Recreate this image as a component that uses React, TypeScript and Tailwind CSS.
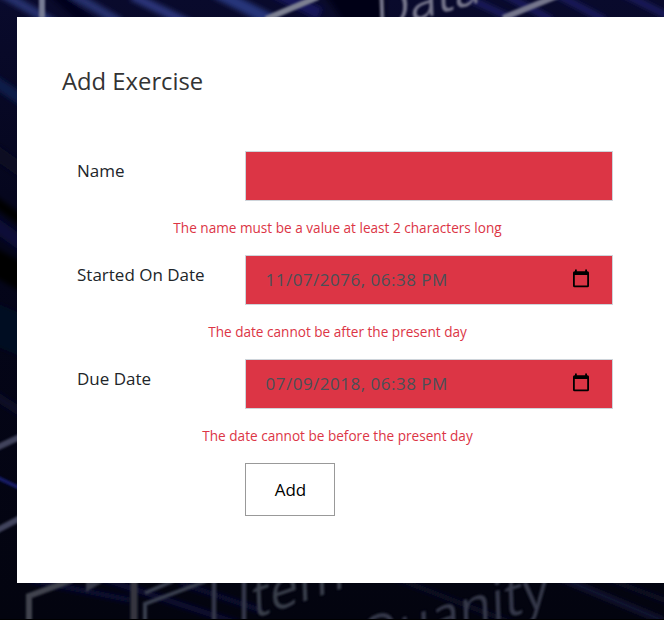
import React from "react";

function Backdrop() {
  return (
    <svg className="absolute inset-0 h-full w-full" viewBox="0 0 664 620" preserveAspectRatio="none" aria-hidden="true">
      <defs>
        <linearGradient id="night" x1="0" y1="0" x2="0" y2="1">
          <stop offset="0" stopColor="#090a2c" />
          <stop offset="0.4" stopColor="#04051a" />
          <stop offset="1" stopColor="#03040f" />
        </linearGradient>
        <filter id="streak" filterUnits="userSpaceOnUse" x="-40" y="-40" width="744" height="700">
          <feGaussianBlur stdDeviation="2.5" />
        </filter>
        <filter id="soft" filterUnits="userSpaceOnUse" x="-40" y="-40" width="744" height="700">
          <feGaussianBlur stdDeviation="0.8" />
        </filter>
      </defs>
      <rect width="664" height="620" fill="url(#night)" />
      <g filter="url(#streak)" fill="none">
        <path d="M-6 -11L54 23M68 -8L120 22" stroke="#26306e" strokeWidth="9" />
        <path d="M52 -10L92 26" stroke="#04051a" strokeWidth="12" />
        <path d="M132 -4L190 24" stroke="#2a3679" strokeWidth="9" />
        <path d="M215 -8L275 22" stroke="#27347a" strokeWidth="12" />
        <path d="M275 -8L320 14" stroke="#15155a" strokeWidth="12" />
        <path d="M325 -6H385V24H345Z" fill="#030313" />
        <path d="M468 -2L515 20M500 -8L552 20M552 -8L605 20M620 -8L680 22" stroke="#1b1e60" strokeWidth="6" />
        <path d="M-20 72L38 110" stroke="#101a4a" strokeWidth="12" />
        <path d="M-20 141L38 182" stroke="#080a22" strokeWidth="14" />
        <path d="M-20 191L38 232" stroke="#000004" strokeWidth="10" />
        <path d="M-20 214L38 255" stroke="#080f38" strokeWidth="14" />
        <path d="M-20 254L38 286" stroke="#000003" strokeWidth="26" />
        <path d="M-20 318L38 342" stroke="#050a24" strokeWidth="40" />
        <path d="M-20 386L38 423" stroke="#080b26" strokeWidth="9" />
        <path d="M100 578L240 624M30 580L130 600M180 583L260 610" stroke="#0a0d38" strokeWidth="5" />
        <path d="M556 576L664 621" stroke="#121635" strokeWidth="6" />
        <path d="M390 576L520 626M600 576L680 606" stroke="#090b25" strokeWidth="5" />
      </g>
      <g filter="url(#soft)" fill="none">
        <path d="M42 -4V18" stroke="#777b94" strokeWidth="6" />
        <path d="M266 19L318 -3" stroke="#7d8092" strokeWidth="6" />
        <path d="M503 18L557 -4" stroke="#75768c" strokeWidth="6" />
        <path d="M-8 450L26 434M-8 533L26 515" stroke="#41435b" strokeWidth="6" />
        <path d="M-8 475L26 491" stroke="#141c66" strokeWidth="4" />
        <path d="M29 624V596L72 580" stroke="#40434e" strokeWidth="6" />
        <path d="M86 581V592L103 582" fill="#353946" />
        <path d="M134 580V624" stroke="#343641" strokeWidth="7" />
        <path d="M145 624V604L206 581M145 593L173 581" stroke="#383d4e" strokeWidth="4" />
        <path d="M214 580V624M244 580V624" stroke="#343849" strokeWidth="4.5" />
      </g>
      <g filter="url(#soft)" fontFamily='"Open Sans", "Noto Sans", sans-serif'>
        <text transform="translate(376 32) rotate(-16) skewX(-14)" fontSize="50" fill="#74748a">Data</text>
        <text transform="translate(253 619) rotate(-19) skewX(-17)" fontSize="53" fill="#383c4a">tem</text>
        <text transform="translate(359 660) rotate(-16) skewX(-14)" fontSize="54" fill="#343849">Quanity</text>
      </g>
      <rect y="619" width="664" height="1" fill="#000000" />
    </svg>
  );
}

function CalendarIcon() {
  return (
    <svg className="relative -top-px h-5 w-5 shrink-0" viewBox="0 0 20 20" fill="#000000" aria-hidden="true">
      <path fillRule="evenodd" d="M4 .6h1.8v1.6h8.4V.6H16v1.6h.5A1.5 1.5 0 0 1 18 3.7v13a1.5 1.5 0 0 1-1.5 1.5h-13A1.5 1.5 0 0 1 2 16.7v-13a1.5 1.5 0 0 1 1.5-1.5H4zM3.8 6v10.5h12.4V6z" />
    </svg>
  );
}

interface FieldProps {
  label: string;
  error: string;
  value?: string;
}

function Field({ label, error, value }: FieldProps) {
  return (
    <div className="h-[104px]">
      <div className="flex">
        <div className="w-[168px] pt-[7px] text-[17px] leading-[26px] text-[#212529]">{label}</div>
        <div className="flex h-[50px] w-[368px] items-center justify-between border border-[#ced4da] bg-[#dc3545] pr-[21px] pl-[19.5px] text-[17px] text-[#495057]">
          {value && (
            <>
              <span className="tracking-[0.5px] whitespace-pre">{value}</span>
              <CalendarIcon />
            </>
          )}
        </div>
      </div>
      <p className="mt-[16px] w-[521px] text-center text-[13.6px] leading-[22px] text-[#dc3545]">{error}</p>
    </div>
  );
}

export default function App() {
  return (
    <div className="relative h-[620px] w-[664px] overflow-hidden pt-[17px] pl-[17px] font-['Open_Sans','Noto_Sans',sans-serif]">
      <Backdrop />
      <main className="relative h-[566px] w-[647px] bg-white pt-[46px] pl-[45px]">
        <h1 className="text-[23.8px] leading-[36px] text-[#333333]">Add Exercise</h1>
        <form className="pt-[52px] pl-[15px]">
          <Field label="Name" error="The name must be a value at least 2 characters long" />
          <Field label="Started On Date" value="11/07/2076, 06:38 PM" error="The date cannot be after the present day" />
          <Field label="Due Date" value="07/09/2018, 06:38 PM" error="The date cannot be before the present day" />
          <button type="button" className="ml-[168px] h-[53px] w-[90px] border border-[#999999] bg-white pl-[1px] text-[17px] text-black">
            Add
          </button>
        </form>
      </main>
    </div>
  );
}
